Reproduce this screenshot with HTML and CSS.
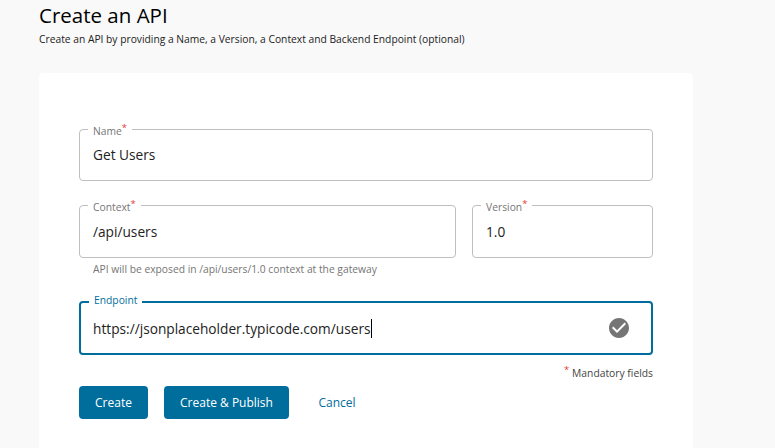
FILE: index.html
```html
<!DOCTYPE html>
<html lang="en">
<head>
<meta charset="utf-8">
<title>Create an API</title>
<link rel="stylesheet" href="styles.css">
</head>
<body>
<main class="page">
  <header class="heading">
    <h1 class="title">Create an API</h1>
    <p class="subtitle">Create an API by providing a Name, a Version, a Context and Backend Endpoint (optional)</p>
  </header>
  <section class="card">
    <div class="field">
      <span class="label">Name<sup class="star">*</sup></span>
      <span class="value">Get Users</span>
    </div>
    <div class="row">
      <div class="field field-context">
        <span class="label">Context<sup class="star">*</sup></span>
        <span class="value">/api/users</span>
      </div>
      <div class="field field-version">
        <span class="label">Version<sup class="star">*</sup></span>
        <span class="value">1.0</span>
      </div>
    </div>
    <p class="helper">API will be exposed in /api/users/1.0 context at the gateway</p>
    <div class="field field-active">
      <span class="label">Endpoint</span>
      <span class="value">https://jsonplaceholder.typicode.com/users</span>
      <span class="caret"></span>
      <svg class="check" viewBox="0 0 24 24"><path d="M12 2C6.480 2 2 6.480 2 12s4.480 10 10 10 10-4.480 10-10S17.520 2 12 2zm-2 15l-5-5 1.410-1.410L10 14.170l7.590-7.590L19 8l-9 9z"/></svg>
    </div>
    <p class="mandatory"><sup class="star">*</sup><span class="mandatory-text">Mandatory fields</span></p>
    <div class="actions">
      <button class="btn btn-create">Create</button>
      <button class="btn btn-publish">Create &amp; Publish</button>
      <button class="btn btn-cancel">Cancel</button>
    </div>
  </section>
</main>
</body>
</html>
```
FILE: styles.css
```css
* { box-sizing: border-box; }

body {
  margin: 0;
  height: 448px;
  background: #f9f9f9;
  font-family: "Open Sans", sans-serif;
  color: #222;
}

.page { width: 654px; margin-left: 39px; }
.heading { height: 73px; }

.title {
  margin: 0;
  padding-top: 1px;
  font-size: 20.5px;
  line-height: 28px;
  font-weight: 400;
  color: #000;
}

.subtitle {
  margin: 0;
  padding-top: 2px;
  font-size: 10.28px;
  line-height: 17px;
}

.card {
  height: 375px;
  padding: 56px 40px 0;
  background: #fff;
  border-radius: 4px 4px 0 0;
}

.field {
  position: relative;
  display: flex;
  align-items: center;
  height: 52px;
  padding: 0 13px;
  border: 1px solid #bfbfbf;
  border-radius: 4px;
}

.label {
  position: absolute;
  top: -6px;
  left: 8px;
  padding: 0 5px;
  background: #fff;
  color: #757575;
  font-size: 10.3px;
  line-height: 15px;
  white-space: nowrap;
}

.star {
  color: #e53935;
  font-size: 9.5px;
  line-height: 0;
  vertical-align: 4px;
}

.value {
  font-size: 13.7px;
  line-height: 20px;
  white-space: nowrap;
}

.row { display: flex; gap: 16px; margin-top: 24px; }
.row .field { height: 53px; }
.field-context { width: 377px; }
.field-version { width: 181px; }

.helper {
  margin: 4px 0 0 14px;
  font-size: 10.29px;
  line-height: 15px;
  color: #757575;
}

.field-active {
  height: 54px;
  margin-top: 24px;
  padding: 0 12px;
  border: 2px solid #006e9c;
}

.field-active .label {
  top: -10px;
  color: #006e9c;
}

.field-active .value { padding-top: 2px; }

.caret { width: 1px; height: 19px; background: #000; }

.check {
  width: 24px;
  height: 24px;
  margin-left: auto;
  margin-right: 8px;
  fill: #757575;
}

.mandatory {
  display: flex;
  justify-content: flex-end;
  gap: 3px;
  margin: 10px 0 0;
  font-size: 10.3px;
  line-height: 16px;
  color: #444;
}

.mandatory .star { line-height: 9px; }

.actions { display: flex; margin-top: 5px; }

.btn {
  height: 33px;
  padding: 0;
  border: 0;
  border-radius: 4px;
  background: #006e9c;
  color: #fff;
  font: 400 12px/20px "Open Sans", sans-serif;
}

.btn-create { width: 69px; margin-right: 16px; }
.btn-publish { width: 125px; margin-right: 16px; }
.btn-cancel { width: 64px; background: none; color: #006e9c; }
```
